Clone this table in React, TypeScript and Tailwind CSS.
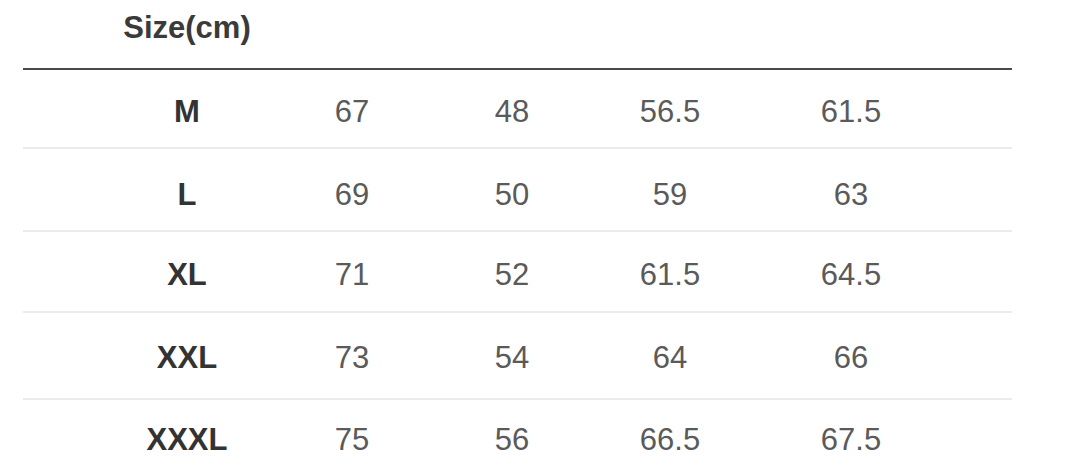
import React from "react";

const rows: { size: string; vals: string[]; h: string; pt: string }[] = [
  { size: "M", vals: ["67", "48", "56.5", "61.5"], h: "h-[79px]", pt: "pt-[6px]" },
  { size: "L", vals: ["69", "50", "59", "63"], h: "h-[83px]", pt: "pt-[10px]" },
  { size: "XL", vals: ["71", "52", "61.5", "64.5"], h: "h-[81px]", pt: "pt-[6px]" },
  { size: "XXL", vals: ["73", "54", "64", "66"], h: "h-[87px]", pt: "pt-[4px]" },
  { size: "XXXL", vals: ["75", "56", "66.5", "67.5"], h: "h-[75px]", pt: "pt-[4px]" },
];

const grid = "grid grid-cols-[166px_164px_156px_160px_202px] pl-[81px]";

export default function App() {
  return (
    <div
      className="w-[1078px] h-[475px] overflow-hidden bg-white"
      style={{ fontFamily: '"Liberation Sans", Arial, sans-serif' }}
    >
      <div className="ml-[23px] w-[989px]">
        <div className={`${grid} h-[70px] pt-[12px] border-b-[2px] border-[#4a4a4a]`}>
          <div className="text-center text-[31px] leading-[31px] font-bold text-[#3a3a3a]">
            Size(cm)
          </div>
        </div>
        {rows.map((r, i) => (
          <div
            key={r.size}
            className={`${grid} ${r.h} ${r.pt} items-center ${
              i < rows.length - 1 ? "border-b-[2px] border-[#ebebeb]" : ""
            }`}
          >
            <div className="text-center text-[31px] leading-[31px] font-bold text-[#333333]">
              {r.size}
            </div>
            {r.vals.map((v, j) => (
              <div
                key={j}
                className="text-center text-[31px] leading-[31px] text-[#5a5a5a]"
              >
                {v}
              </div>
            ))}
          </div>
        ))}
      </div>
    </div>
  );
}
